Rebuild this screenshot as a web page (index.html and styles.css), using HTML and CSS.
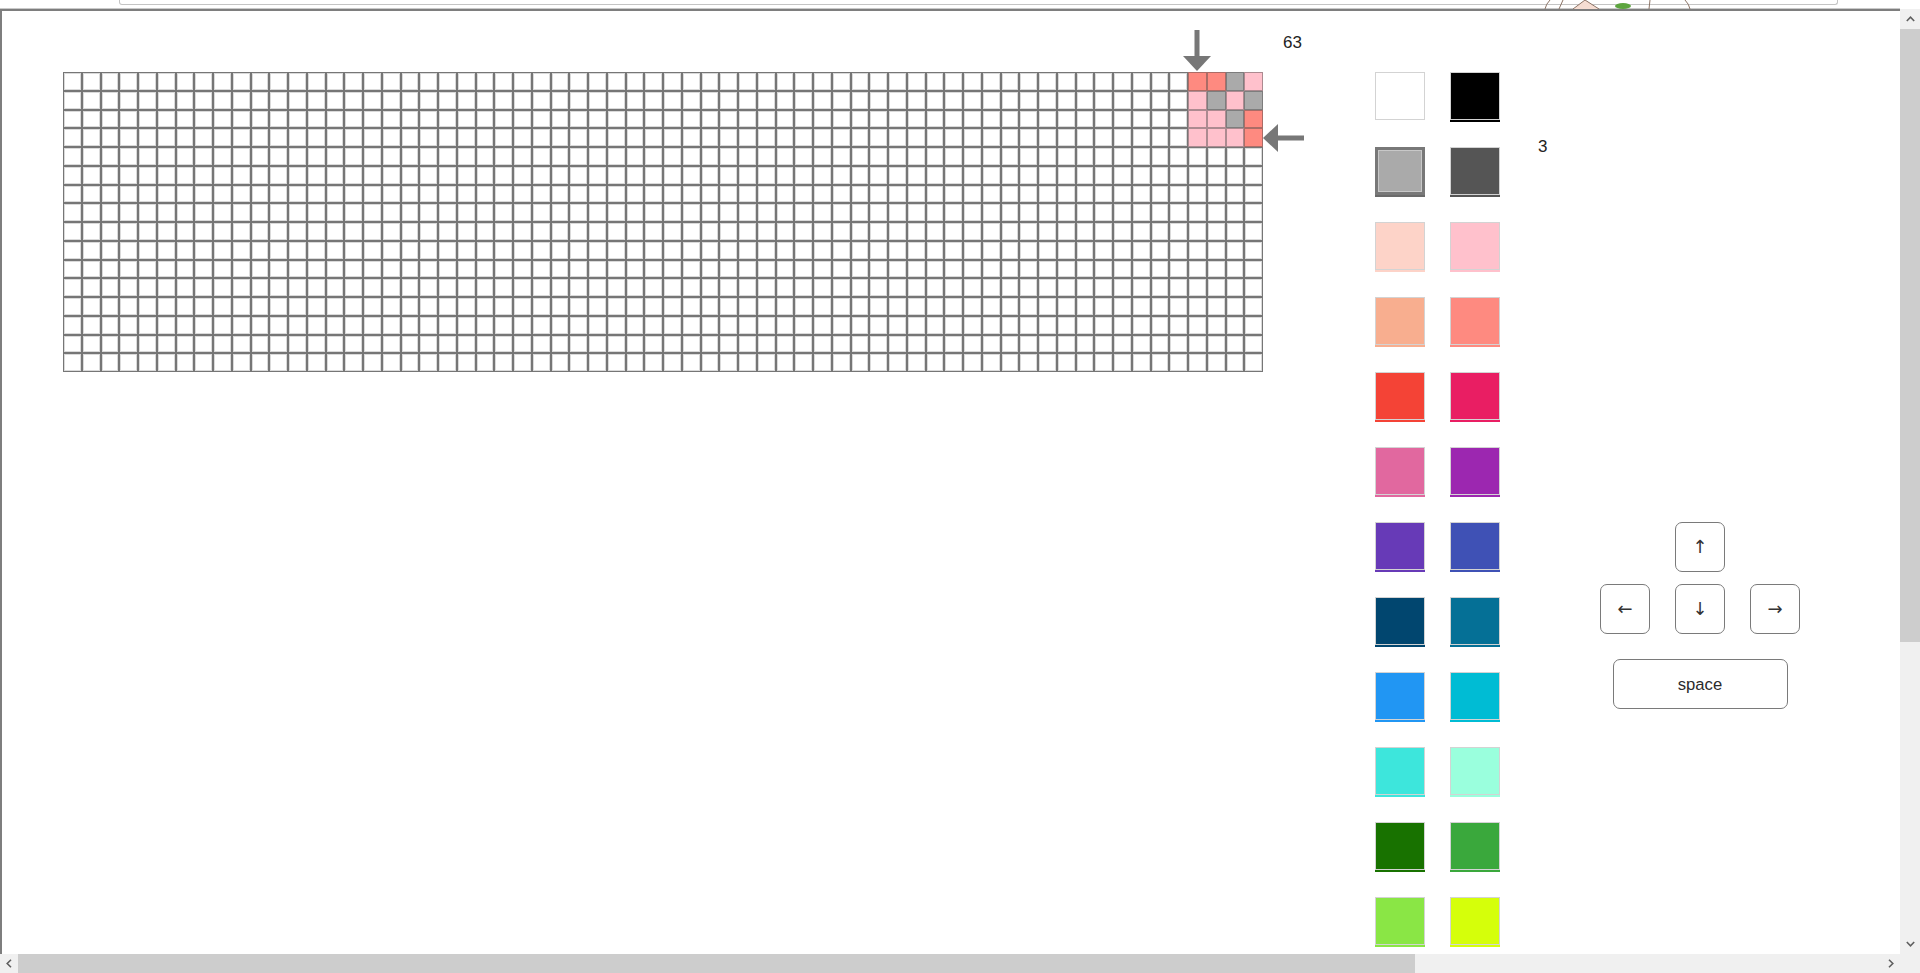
FILE: index.html
```html
<!DOCTYPE html>
<html lang="en">
<head>
<meta charset="utf-8">
<title>Pixel editor</title>
<link rel="stylesheet" href="styles.css">
</head>
<body>
<div class="page">
  <div class="topstrip">
    <div class="addr"></div>
    <svg class="sketch" width="150" height="9" viewBox="0 0 150 9">
      <path d="M2 9 Q3 4 7 0" />
      <path d="M16 9 L20 0" />
      <path class="peak" d="M30 9 L42 0 L56 9" />
      <ellipse class="leaf" cx="80" cy="6" rx="8" ry="3" />
      <path d="M106 9 L107 0" />
      <path d="M147 9 Q146 4 142 0" />
    </svg>
  </div>
  <div class="window">
    <main class="frame">
      <div class="board-wrap">
        <div class="board" id="board"></div>
        <svg class="pointer pointer-down" style="left:1120.4px" width="28" height="41" viewBox="0 0 28 41"><rect x="11.5" y="0" width="5" height="26"/><polygon points="0,26 28,26 14,41"/></svg>
        <svg class="pointer pointer-left" style="top:51.6px" width="41" height="28" viewBox="0 0 41 28"><polygon points="0,14 15,0 15,28"/><rect x="15" y="11.5" width="26" height="5"/></svg>
      </div>
      <div class="col-label">63</div>
      <div class="palette">
        <div class="swatch" style="--c:#ffffff"></div>
        <div class="swatch" style="--c:#000000"></div>
        <div class="swatch sel" style="--c:#aaaaaa"></div>
        <div class="swatch" style="--c:#555555"></div>
        <div class="swatch" style="--c:#fdd3c8"></div>
        <div class="swatch" style="--c:#ffc1cc"></div>
        <div class="swatch" style="--c:#f8ae8f"></div>
        <div class="swatch" style="--c:#fe8a80"></div>
        <div class="swatch" style="--c:#f44336"></div>
        <div class="swatch" style="--c:#e91e63"></div>
        <div class="swatch" style="--c:#e1689f"></div>
        <div class="swatch" style="--c:#9c27b0"></div>
        <div class="swatch" style="--c:#673ab7"></div>
        <div class="swatch" style="--c:#3f51b5"></div>
        <div class="swatch" style="--c:#01466f"></div>
        <div class="swatch" style="--c:#057096"></div>
        <div class="swatch" style="--c:#2196f3"></div>
        <div class="swatch" style="--c:#00bcd4"></div>
        <div class="swatch" style="--c:#3de6dc"></div>
        <div class="swatch" style="--c:#9affdd"></div>
        <div class="swatch" style="--c:#187200"></div>
        <div class="swatch" style="--c:#3aa83c"></div>
        <div class="swatch" style="--c:#8ae645"></div>
        <div class="swatch" style="--c:#d5ff0a"></div>
      </div>
      <div class="row-label">3</div>
      <div class="controls">
        <div class="key-row">
          <button class="key arrow">↑</button>
        </div>
        <div class="key-row mid">
          <button class="key arrow">←</button>
          <button class="key arrow">↓</button>
          <button class="key arrow">→</button>
        </div>
        <button class="key space">space</button>
      </div>
    </main>
    <div class="vbar">
      <div class="sb-btn"><svg width="9" height="6" viewBox="0 0 9 6"><polyline points="0.8,5 4.5,1.2 8.2,5"/></svg></div>
      <div class="vthumb"></div>
      <div class="sb-track"></div>
      <div class="sb-btn"><svg width="9" height="6" viewBox="0 0 9 6"><polyline points="0.8,1 4.5,4.8 8.2,1"/></svg></div>
    </div>
    <div class="hbar">
      <div class="sb-btn h"><svg width="6" height="9" viewBox="0 0 6 9"><polyline points="5,0.8 1.2,4.5 5,8.2"/></svg></div>
      <div class="hthumb"></div>
      <div class="sb-track"></div>
      <div class="sb-btn h"><svg width="6" height="9" viewBox="0 0 6 9"><polyline points="1,0.8 4.8,4.5 1,8.2"/></svg></div>
    </div>
    <div class="corner"></div>
  </div>
</div>
<script src="script.js"></script>
</body>
</html>
```

FILE: styles.css
```css
* { box-sizing: border-box; }

html, body {
  margin: 0;
  padding: 0;
  width: 1920px;
  height: 973px;
  overflow: hidden;
  background: #fff;
  font-family: "Liberation Sans", Arial, sans-serif;
  color: #222;
}

.page {
  display: flex;
  flex-direction: column;
  height: 973px;
}

/* strip of the outer page above the frame */
.topstrip {
  position: relative;
  height: 9px;
  overflow: hidden;
}
.addr {
  margin-left: 119px;
  width: 1719px;
  height: 5px;
  border: 1px solid #c4c4c4;
  border-top: none;
  border-radius: 0 0 3px 3px;
}
.sketch {
  position: absolute;
  left: 1543px;
  top: 0;
}
.sketch path {
  fill: none;
  stroke: #8c7466;
  stroke-width: 1;
}
.sketch .peak { fill: #f6ddd2; }
.sketch .leaf { fill: #5da53f; }

/* frame + scrollbars */
.window {
  display: grid;
  grid-template-columns: 1900px 20px;
  grid-template-rows: 945px 19px;
}

.frame {
  display: flex;
  align-items: flex-start;
  overflow: hidden;
  border-top: 2px solid #7e7e7e;
  border-left: 2px solid #7e7e7e;
  box-shadow: 0 -1px 0 #c9c9c9;
}

.vbar {
  display: flex;
  flex-direction: column;
  background: #f0f0f0;
}
.hbar {
  display: flex;
  background: #f0f0f0;
}
.corner { background: #f0f0f0; }

.sb-btn {
  flex: 0 0 20px;
  display: flex;
  align-items: center;
  justify-content: center;
}
.sb-btn.h { flex-basis: 18px; }
.sb-btn:last-child.h { flex-basis: 19px; }
.sb-btn polyline {
  fill: none;
  stroke: #5f5f5f;
  stroke-width: 1.6;
}
.vthumb {
  flex: 0 0 613px;
  background: #cdcdcd;
}
.hthumb {
  flex: 0 0 1397px;
  background: #cdcdcd;
}
.sb-track { flex: 1; }

/* drawing board */
.board-wrap {
  position: relative;
  flex: 0 0 auto;
  width: 1200px;
  margin: 61px 0 0 61px;
}
.board {
  display: grid;
  grid-template-columns: repeat(64, 18.75px);
  grid-auto-rows: 18.75px;
}
.cell {
  border: 1px solid #767676;
  box-shadow: inset 0 0 0 1px #dadada;
  background: #fff;
}
.cell.s, .cell.p, .cell.g {
  box-shadow: none;
  border-color: rgba(70, 70, 70, 0.45);
}
.cell.s { background: #fe8a80; }
.cell.p { background: #ffc1cc; }
.cell.g { background: #aaaaaa; }

.pointer {
  position: absolute;
  fill: #777777;
}
.pointer-down { top: -42px; }
.pointer-left { left: 1200px; }

.col-label {
  flex: 0 0 112px;
  margin-top: 22px;
  padding-left: 20px;
  font-size: 17px;
  line-height: 20px;
}

.palette {
  flex: 0 0 auto;
  margin-top: 61px;
  display: grid;
  grid-template-columns: 50px 50px;
  column-gap: 25px;
  row-gap: 25px;
}
.swatch {
  width: 50px;
  height: 48px;
  margin-bottom: 2px;
  border: 1px solid #d3d3d3;
  background: var(--c);
  box-shadow: 0 2px 0 var(--c);
}
.swatch.sel {
  border: 3px solid #787878;
  box-shadow: inset 0 0 0 1px #c8c8c8, 0 2px 0 #6a6a6a;
}

.row-label {
  flex: 0 0 100px;
  margin-top: 126px;
  padding-left: 38px;
  font-size: 17px;
  line-height: 20px;
}

.controls {
  flex: 0 0 200px;
  margin-top: 511px;
  display: flex;
  flex-direction: column;
  align-items: center;
}
.key-row {
  display: flex;
  justify-content: center;
  gap: 25px;
}
.key-row.mid { margin-top: 12px; }

.key {
  width: 50px;
  height: 50px;
  padding: 0;
  margin: 0;
  border: 1px solid #7a7a7a;
  border-radius: 7px;
  background: #fff;
  color: #2b2b2b;
  font-family: "Liberation Sans", Arial, sans-serif;
  font-size: 16.67px;
  line-height: 1;
}
.key.arrow {
  font-family: "DejaVu Sans", "Liberation Sans", sans-serif;
  font-size: 18px;
  color: #333;
}
.key.space {
  width: 175px;
  margin-top: 25px;
  padding-top: 2px;
}
```

FILE: script.js
```js
(function () {
  var board = document.getElementById('board');
  var COLS = 64;
  var ROWS = 16;
  // painted pixels in the top-right corner (columns 60..63)
  var painted = {
    0: 'ssgp',
    1: 'pgpg',
    2: 'ppgs',
    3: 'ppps'
  };
  var frag = document.createDocumentFragment();
  for (var r = 0; r < ROWS; r++) {
    for (var c = 0; c < COLS; c++) {
      var cell = document.createElement('div');
      cell.className = 'cell';
      if (painted[r] && c >= 60) {
        cell.className += ' ' + painted[r].charAt(c - 60);
      }
      frag.appendChild(cell);
    }
  }
  board.appendChild(frag);
})();
```
